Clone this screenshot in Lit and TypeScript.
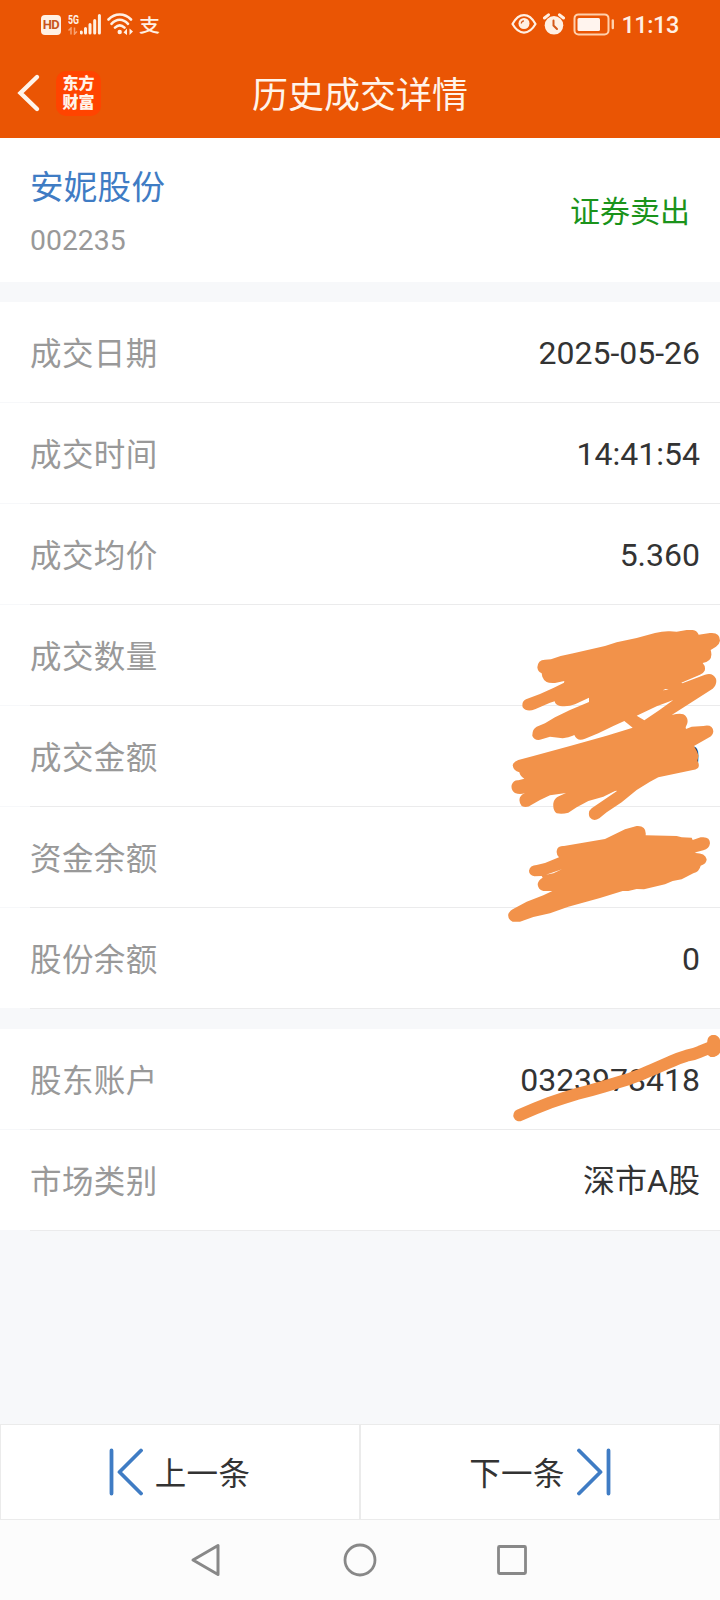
import { LitElement, html, css, svg } from "lit";
import { customElement } from "lit/decorators.js";

interface Row {
  label: string;
  value: string;
}

const TRADE_ROWS: Row[] = [
  { label: "成交日期", value: "2025-05-26" },
  { label: "成交时间", value: "14:41:54" },
  { label: "成交均价", value: "5.360" },
  { label: "成交数量", value: "" },
  { label: "成交金额", value: "0" },
  { label: "资金余额", value: "" },
  { label: "股份余额", value: "0" },
];

const ACCOUNT_ROWS: Row[] = [
  { label: "股东账户", value: "0323978418" },
  { label: "市场类别", value: "深市A股" },
];

@customElement("status-bar")
class StatusBar extends LitElement {
  static styles = css`
    :host {
      display: flex;
      height: 48px;
      justify-content: space-between;
      align-items: center;
      padding: 0 41px 0 41px;
      color: #fff0e4;
    }
    .side {
      display: flex;
      align-items: center;
    }
    svg {
      display: block;
    }
    .hd {
      width: 20px;
      height: 20px;
      margin-top: 2px;
      border-radius: 4px;
      background: #fff0e4;
      color: #c8561c;
      font: 700 13px/20px Roboto, sans-serif;
      letter-spacing: -0.5px;
      text-align: center;
    }
    .net {
      display: flex;
      margin-left: 7px;
      align-items: flex-end;
      height: 22px;
    }
    .gen {
      display: flex;
      flex-direction: column;
      gap: 2px;
      height: 22px;
      width: 12px;
      font: 700 13.5px/12px "Roboto", sans-serif;
    }
    .gen span {
      width: 18px;
      transform: scaleX(0.65);
      transform-origin: 0 50%;
    }
    .wifi {
      margin-left: 6px;
    }
    .pay {
      margin-left: 5px;
      font: 500 21px/24px "Noto Sans CJK SC", sans-serif;
      transform: scaleY(0.86);
    }
    .alarm {
      margin-left: 5px;
    }
    .battery {
      margin-left: 7px;
    }
    .clock {
      font: 500 23.5px/28px Roboto, sans-serif;
      margin-left: 6px;
      letter-spacing: -0.4px;
      padding-top: 2px;
    }
  `;

  render() {
    return html`
      <div class="side">
        <div class="hd">HD</div>
        <div class="net">
          <div class="gen">
            <span>5G</span>
            <svg width="10" height="8" viewBox="0 0 10 8" fill="none" stroke="#f7a272" stroke-width="1.5">
              <path d="M0.5 3.5 L3 1V7.5M9 4.5L6.5 7V0.5" />
            </svg>
          </div>
          <svg width="21" height="22" viewBox="0 0 21 22" stroke="#fff0e4" stroke-width="3" stroke-linecap="round">
            <path d="M1.3 19v.9M5.5 15.500v4.400M10 11.500v8.400M14.700 7.500v12.400M19.400 2.500v17.400" />
          </svg>
        </div>
        <svg class="wifi" width="27" height="22" viewBox="0 0 27 22" fill="none" stroke="#fff0e4" stroke-width="2.600" stroke-linecap="round">
          <path d="M1.500 6.500C8-.2 17.500-.2 24 6.500M4.500 10.800C9.500 5.300 16 5.300 21 10.800M8 14.600C11 11.700 14.500 11.700 17.500 14.600" />
          <circle cx="12.700" cy="19" r="2.200" fill="#fff0e4" stroke="none" />
          <path d="M16.500 19.500L20 15.500V22ZM26 18.500L22.500 22V15.500Z" fill="#fff0e4" stroke="none" />
        </svg>
        <div class="pay">支</div>
      </div>
      <div class="side">
        <svg width="26" height="22" viewBox="0 0 26 22" fill="none" stroke="#fff0e4" stroke-width="2.200">
          <path d="M1.500 11C8-.8 18-.8 24.500 11C18 22.400 8 22.400 1.500 11Z" stroke-linejoin="round" />
          <circle cx="13" cy="10.500" r="5.500" fill="#fff0e4" stroke="none" />
          <path d="M10.300 10.500Q10.500 8 13 7.800" stroke="#d4581a" stroke-width="1.300" />
        </svg>
        <svg class="alarm" width="24" height="22" viewBox="0 0 24 22" fill="none">
          <circle cx="12" cy="12.300" r="9.300" fill="#fff0e4" />
          <path d="M2.500 5L6.500 1.800M21.500 5L17.500 1.800" stroke="#fff0e4" stroke-width="3" stroke-linecap="round" />
          <path d="M11.500 7.500V12.500L15 16" stroke="#d4581a" stroke-width="2" stroke-linecap="round" />
        </svg>
        <svg class="battery" width="42" height="24" viewBox="0 0 42 24" fill="none">
          <rect x="1.500" y="2.400" width="34" height="20" rx="4" stroke="#ffd0ac" stroke-width="2" />
          <rect x="4.500" y="6" width="22.500" height="13" rx="1.500" fill="#fff4ee" />
          <path d="M39.800 8.500v7.500" stroke="#ffd0ac" stroke-width="2.400" stroke-linecap="round" />
        </svg>
        <div class="clock">11:13</div>
      </div>
    `;
  }
}

@customElement("detail-row")
class DetailRow extends LitElement {
  static properties = { label: {}, value: {} };
  declare label: string;
  declare value: string;

  static styles = css`
    :host {
      display: flex;
      flex-direction: column;
      height: 101px;
    }
    .line {
      flex: 1;
      display: flex;
      align-items: center;
      justify-content: space-between;
      padding: 2px 20px 0 30px;
      background: #fff;
      font-size: 32px;
      line-height: 48px;
    }
    .label {
      color: #999;
      font-size: 31.500px;
      letter-spacing: 0.4px;
      padding-top: 4px;
    }
    .value {
      color: #333;
    }
    .rule {
      height: 1px;
      margin-left: 30px;
      background: #ebebec;
    }
  `;

  render() {
    return html`
      <div class="line">
        <span class="label">${this.label}</span>
        <span class="value">${this.value}</span>
      </div>
      <div class="rule"></div>
    `;
  }
}

// Marker strokes laid over the private figures, drawn at three times page scale.
const marks = svg`
  <g transform="translate(490 610) scale(.33333)">
    <path d="M142 172Q143 150 165 149L183 148L212 138L250 130L345 108L380 97L440 84L495 69Q520 63 540 64L560 65L590 60L608 60Q622 62 626 74L660 69Q690 66 690 92Q688 104 678 110L662 120Q668 140 658 150Q650 157 638 159Q648 170 644 182Q640 190 630 194L574 218L577 220L645 194Q668 186 678 206Q682 224 668 236L640 254L545 315Q570 308 580 313Q596 322 592 340L587 352L588 357L605 350L640 348Q668 342 670 364Q669 376 658 382L612 408Q622 425 626 437L622 452Q630 465 624 474Q618 480 605 481L505 502L480 515L440 540L395 577L350 607L328 625Q310 636 299 622Q292 605 305 595L382 542L375 543L340 560L295 573L260 592L235 608Q218 613 200 610Q188 602 190 580Q192 565 208 558L228 549L180 556L150 570L125 584Q110 596 95 588Q85 575 90 562Q94 553 105 549Q90 555 75 549Q62 540 65 525Q70 510 85 511L103 506Q90 498 88 487Q70 482 68 466Q70 455 85 450L130 438L240 408L350 377L428 353L403 333L370 348L325 370L285 386Q262 396 253 375L248 377L235 382L218 385L180 380L155 388Q135 394 127 378Q126 358 140 350L165 340L195 322L240 300L297 276L297 263L255 283Q235 291 210 288Q196 285 194 274L180 278L135 298Q110 308 98 292Q94 275 108 268L150 252L190 234L222 218L223 213L195 219Q165 222 157 200L155 190Q143 185 142 172Z
      M550 270L500 289L440 317L463 331Q510 300 550 270ZM518 241L527 237L536 239Z" fill-rule="evenodd" />
  </g>
  <g transform="translate(490 810) scale(.33333)">
    <path d="M117 182Q120 166 140 165L165 159L207 142Q196 130 202 116Q207 107 222 108L345 87L405 58L440 48Q470 46 467 76L560 78L575 82L605 83L608 90L632 82Q660 78 660 100Q658 116 640 121L620 126L614 129Q645 128 650 148Q650 162 632 167Q628 185 610 190L575 208L548 213L525 223L462 238L440 237L415 243L398 243L330 264L235 290L180 310L130 321L90 335L68 335Q52 328 55 312Q60 300 75 294L110 275L160 256L187 243L160 243Q143 238 143 222Q145 210 158 203L155 198L133 199Q117 195 117 182Z
      M168 194L216 178L190 190Z" fill-rule="evenodd" />
  </g>
  <g transform="translate(490 1020) scale(.33333)">
    <path class="slash" d="M88 286Q135 265 180 248Q220 234 260 222Q300 212 340 200L420 176Q450 166 480 152L540 126Q565 114 590 107Q612 103 630 95L660 83M670 63L667 93" />
    <path d="M655 58Q662 44 674 45Q688 49 690 60L690 98Q682 111 662 111L650 100Z" />
  </g>`;

@customElement("app-root")
class AppRoot extends LitElement {
  static styles = css`
    :host {
      display: block;
      position: relative;
      width: 720px;
      height: 1600px;
      overflow: hidden;
      font-family: Roboto, "Noto Sans CJK SC", sans-serif;
    }
    .page {
      display: flex;
      flex-direction: column;
      height: 1600px;
      background: #f7f8fa;
    }
    svg {
      display: block;
    }
    .header {
      background: #ea5504;
      height: 138px;
    }
    .titlebar {
      display: grid;
      grid-template-columns: 120px 1fr 120px;
      align-items: center;
      height: 90px;
    }
    .left {
      display: flex;
      align-items: center;
      padding-left: 15px;
      gap: 15px;
    }
    .logo {
      width: 45px;
      height: 45px;
      box-sizing: border-box;
      padding-top: 2px;
      border-radius: 10px;
      background: #ff4400;
      color: #fff4ea;
      font: 900 16px/19px "Noto Sans CJK SC", sans-serif;
      text-align: center;
    }
    .title {
      color: #fff4ea;
      font-size: 36px;
      line-height: 54px;
      text-align: center;
      padding-top: 6px;
    }
    .summary {
      display: flex;
      justify-content: space-between;
      align-items: center;
      height: 144px;
      box-sizing: border-box;
      padding: 3px 30px 0;
      background: #fff;
    }
    .name {
      color: #3f7cc4;
      font-size: 33.500px;
      letter-spacing: 0.3px;
      line-height: 50px;
    }
    .code {
      color: #999;
      font-size: 28.400px;
      line-height: 40px;
      margin-top: 8px;
    }
    .side {
      color: #1b931b;
      font-size: 30px;
      line-height: 44px;
    }
    .group {
      margin-top: 20px;
    }
    .pager {
      display: grid;
      grid-template-columns: 1fr 1fr;
      height: 96px;
      margin-top: auto;
    }
    .step {
      display: flex;
      align-items: center;
      justify-content: center;
      gap: 12px;
      border: 1px solid #ebebeb;
      background: #fff;
      color: #333;
      font-size: 31.500px;
      letter-spacing: 0.3px;
      line-height: 48px;
    }
    .prev {
      padding-right: 1px;
    }
    .step span {
      padding-top: 6px;
    }
    .step svg {
      margin-top: -1px;
    }
    .nav {
      display: flex;
      justify-content: space-between;
      align-items: center;
      height: 80px;
      padding: 0 188px;
      background: #fcfcfc;
    }
    .marks {
      position: absolute;
      left: 0;
      top: 0;
      fill: #f2924a;
      pointer-events: none;
    }
    .slash {
      fill: none;
      stroke: #f2924a;
      stroke-width: 36px;
      stroke-linecap: round;
      stroke-linejoin: round;
    }
  `;

  private rows(list: Row[]) {
    return list.map((r) => html`<detail-row .label=${r.label} .value=${r.value}></detail-row>`);
  }

  render() {
    return html`
      <div class="page">
        <div class="header">
          <status-bar></status-bar>
          <div class="titlebar">
            <div class="left">
              <svg width="26" height="40" viewBox="0 0 26 40" fill="none" stroke="#fff4ea" stroke-width="4.400" stroke-linecap="round" stroke-linejoin="miter">
                <path d="M22 4L5.500 20L22 36" />
              </svg>
              <div class="logo">东方<br />财富</div>
            </div>
            <div class="title">历史成交详情</div>
          </div>
        </div>
        <div class="summary">
          <div>
            <div class="name">安妮股份</div>
            <div class="code">002235</div>
          </div>
          <div class="side">证券卖出</div>
        </div>
        <div class="group">${this.rows(TRADE_ROWS)}</div>
        <div class="group">${this.rows(ACCOUNT_ROWS)}</div>
        <div class="pager">
          <div class="step prev">
            <svg width="34" height="48" viewBox="0 0 34 48" fill="none" stroke="#3f7cc4" stroke-width="3.800" stroke-linecap="round" stroke-linejoin="round">
              <path d="M2.500 2.500V45.500M32 2.500L10.500 24L32 45.500" />
            </svg>
            <span>上一条</span>
          </div>
          <div class="step">
            <span>下一条</span>
            <svg width="34" height="48" viewBox="0 0 34 48" fill="none" stroke="#3f7cc4" stroke-width="3.800" stroke-linecap="round" stroke-linejoin="round">
              <path d="M31.500 2.500V45.500M2 2.500L23.500 24L2 45.500" />
            </svg>
          </div>
        </div>
        <div class="nav">
          <svg width="40" height="40" viewBox="0 0 40 40" fill="none" stroke="#888" stroke-width="3" stroke-linejoin="round">
            <path d="M5 20L30 5.500V34.500Z" />
          </svg>
          <svg width="40" height="40" viewBox="0 0 40 40" fill="none" stroke="#888" stroke-width="2.800">
            <circle cx="20" cy="20" r="15" />
          </svg>
          <svg width="40" height="40" viewBox="0 0 40 40" fill="none" stroke="#888" stroke-width="2.800">
            <rect x="6.500" y="6.500" width="27" height="27" rx="1" />
          </svg>
        </div>
      </div>
      <svg class="marks" width="720" height="1600" viewBox="0 0 720 1600">${marks}</svg>
    `;
  }
}
